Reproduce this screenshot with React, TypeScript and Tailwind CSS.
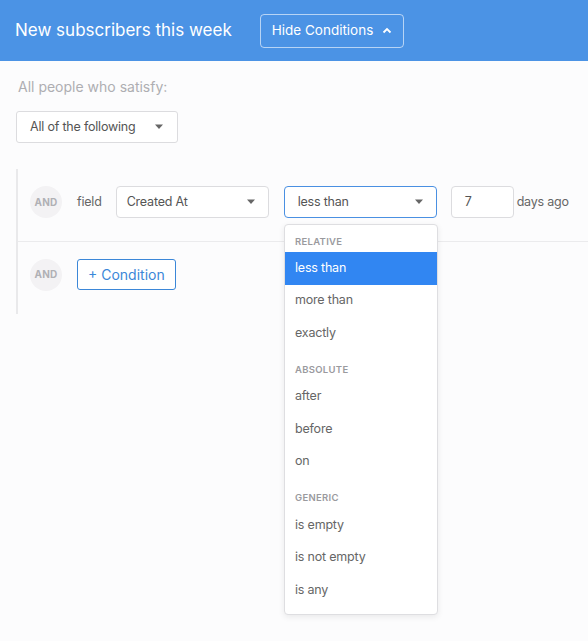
import React from 'react';

function Caret() {
  return (
    <svg width="10" height="6" viewBox="0 0 10 6" className="shrink-0">
      <path d="M1 0.5 L9 0.5 L5 5 Z" fill="#666" />
    </svg>
  );
}

function AndBadge() {
  return (
    <div className="w-[32px] h-[32px] rounded-full bg-[#f3f2f4] flex items-center justify-center text-[10px] font-bold text-[#b0b0b4] tracking-wide">
      AND
    </div>
  );
}

const groups = [
  { title: 'RELATIVE', items: ['less than', 'more than', 'exactly'] },
  { title: 'ABSOLUTE', items: ['after', 'before', 'on'] },
  { title: 'GENERIC', items: ['is empty', 'is not empty', 'is any'] },
];

export default function App() {
  return (
    <div
      className="w-[588px] h-[641px] bg-[#fcfcfd] overflow-hidden text-[#555]"
      style={{ fontFamily: 'Inter, "Liberation Sans", sans-serif' }}
    >
      {/* Header */}
      <header className="h-[61px] bg-[#4b93e5] flex items-center pl-[15px] gap-[28px]">
        <h1 className="text-[17px] text-white font-normal">New subscribers this week</h1>
        <button className="h-[34px] px-[11px] border border-white/60 rounded-[4px] flex items-center gap-[9px] text-white text-[13.5px]">
          Hide Conditions
          <svg width="10" height="7" viewBox="0 0 10 7">
            <path d="M1.5 5.5 L5 2 L8.5 5.5" stroke="white" strokeWidth="1.8" fill="none" />
          </svg>
        </button>
      </header>

      <div className="pl-[16px] pt-[17px]">
        <p className="pl-[2px] text-[14px] text-[#aeaeb2] leading-[18px]">All people who satisfy:</p>
        <div className="mt-[15px] w-[162px] h-[32px] border border-[#dcdcdf] rounded-[3px] bg-white flex items-center justify-between pl-[13px] pr-[13px] text-[12.5px] tracking-[-0.2px] text-[#555]">
          All of the following
          <Caret />
        </div>

        {/* Conditions */}
        <div className="relative mt-[26px] border-l-[2px] border-[#e9e9eb] h-[145px] text-[12.5px] tracking-[-0.2px]">
          <div className="h-[73px] flex items-center pl-[12px] pb-[6px] border-b border-[#ebebed]">
            <AndBadge />
            <span className="ml-[15px] text-[#666]">field</span>
            <div className="ml-[14px] w-[153px] h-[32px] border border-[#dcdcdf] rounded-[4px] bg-white flex items-center justify-between pl-[10px] pr-[12px]">
              Created At
              <Caret />
            </div>
            <div className="relative ml-[15px] w-[153px] h-[32px] border border-[#4a90e2] rounded-[4px] bg-white flex items-center justify-between pl-[13px] pr-[12px]">
              less than
              <Caret />
            </div>
            <div className="ml-[14px] w-[63px] h-[32px] border border-[#dcdcdf] rounded-[4px] bg-white flex items-center pl-[13px]">
              7
            </div>
            <span className="ml-[3px] text-[#666]">days ago</span>
          </div>
          <div className="h-[66px] flex items-center pl-[12px] pb-[1px]">
            <AndBadge />
            <button className="ml-[15px] h-[31px] px-[10px] border border-[#3b87d8] rounded-[3px] bg-white text-[#3b87d8] text-[14px] tracking-normal">
              + Condition
            </button>
          </div>

          {/* Dropdown menu */}
          <div className="absolute left-[266px] top-[55px] w-[154px] bg-white border border-[#dedee1] rounded-[4px] shadow-[0_2px_6px_rgba(0,0,0,0.08)] pb-[7px]">
            {groups.map((g, i) => (
              <div key={g.title}>
                <div
                  className={
                    i === 0
                      ? 'h-[27px] pt-[10px] pl-[10px] text-[9.5px] leading-[14px] font-semibold tracking-[0.3px] text-[#9a9a9e]'
                      : 'h-[31px] pt-[13px] pl-[10px] text-[9.5px] leading-[14px] font-semibold tracking-[0.3px] text-[#9a9a9e]'
                  }
                >
                  {g.title}
                </div>
                {g.items.map((it) => (
                  <div
                    key={it}
                    className={
                      it === 'less than'
                        ? 'h-[32.5px] flex items-center pl-[10px] bg-[#3186f2] text-white'
                        : 'h-[32.5px] flex items-center pl-[10px] text-[#666]'
                    }
                  >
                    {it}
                  </div>
                ))}
              </div>
            ))}
          </div>
        </div>
      </div>
    </div>
  );
}
